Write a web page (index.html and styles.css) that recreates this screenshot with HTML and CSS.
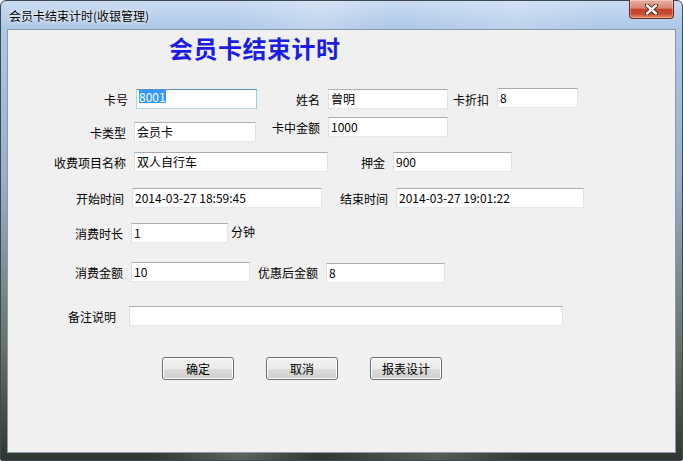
FILE: index.html
```html
<html>

<head>
    <link rel="stylesheet" href="styles.css">
</head>

<body>
    <div class="window">
        <div class="titlebar">
            <span class="title">会员卡结束计时(收银管理)</span>
            <div class="close">
                <svg width="13" height="11" viewBox="0 0 13 11">
                    <path d="M2 1.5 L11 9.5 M11 1.5 L2 9.5" stroke="#3a1810" stroke-width="4.2" stroke-linecap="round" />
                    <path d="M2 1.5 L11 9.5 M11 1.5 L2 9.5" stroke="#ffffff" stroke-width="2.4" stroke-linecap="round" />
                </svg>
            </div>
        </div>

        <div class="client">
            <h1 class="heading">会员卡结束计时</h1>

            <div class="row r1">
                <label class="lbl">卡号</label>
                <div class="tb focus"><span class="sel">8001</span></div>
                <label class="lbl">姓名</label>
                <div class="tb">曾明</div>
                <label class="lbl">卡折扣</label>
                <div class="tb up1">8</div>
            </div>

            <div class="row r2">
                <label class="lbl dn5">卡类型</label>
                <div class="tb dn5">会员卡</div>
                <label class="lbl">卡中金额</label>
                <div class="tb">1000</div>
            </div>

            <div class="row r3">
                <label class="lbl">收费项目名称</label>
                <div class="tb">双人自行车</div>
                <label class="lbl">押金</label>
                <div class="tb">900</div>
            </div>

            <div class="row r4">
                <label class="lbl">开始时间</label>
                <div class="tb">2014-03-27 18:59:45</div>
                <label class="lbl">结束时间</label>
                <div class="tb">2014-03-27 19:01:22</div>
            </div>

            <div class="row r5">
                <label class="lbl">消费时长</label>
                <div class="tb">1</div>
                <span class="unit">分钟</span>
            </div>

            <div class="row r6">
                <label class="lbl">消费金额</label>
                <div class="tb">10</div>
                <label class="lbl">优惠后金额</label>
                <div class="tb dn1">8</div>
            </div>

            <div class="row r7">
                <label class="lbl">备注说明</label>
                <div class="tb"></div>
            </div>

            <div class="buttons">
                <button class="btn">确定</button>
                <button class="btn">取消</button>
                <button class="btn">报表设计</button>
            </div>
        </div>
    </div>
</body>

</html>
```

FILE: styles.css
```css
* {
    box-sizing: border-box;
}

body {
    margin: 0;
    background: #fff;
    font-family: 'Noto Sans CJK SC', 'Liberation Sans', sans-serif;
    font-size: 12px;
    overflow: hidden;
}

/* window frame */

.window {
    width: 683px;
    height: 461px;
    display: flex;
    flex-direction: column;
    padding: 0 6px 7px 6px;
    border: 1px solid #3e4852;
    border-radius: 6px 6px 2px 2px;
    background:
        linear-gradient(100deg, rgba(255, 255, 255, 0) 30%, rgba(255, 255, 255, .22) 42%, rgba(255, 255, 255, 0) 52%, rgba(255, 255, 255, .18) 68%, rgba(255, 255, 255, 0) 80%),
        linear-gradient(#c8dbf1 0, #adc7e7 28px, #97afc6 40%, #66736c 75%, #2f3631 100%);
}

.titlebar {
    height: 28px;
    display: flex;
    align-items: center;
    justify-content: space-between;
}

.title {
    padding-left: 2px;
    font-size: 12px;
    color: #000;
    text-shadow: 0 0 6px rgba(255, 255, 255, .9), 0 0 2px rgba(255, 255, 255, .9);
}

.close {
    align-self: flex-start;
    width: 45px;
    height: 19px;
    margin-top: -1px;
    margin-right: 2px;
    display: flex;
    align-items: center;
    justify-content: center;
    border: 1px solid #6b281c;
    border-top: none;
    border-radius: 0 0 4px 4px;
    background: linear-gradient(#eab0a2 0%, #d88473 45%, #c3432c 52%, #c64a30 75%, #e3895f 100%);
    box-shadow: inset 0 0 0 1px rgba(255, 255, 255, .3);
}

.client {
    flex: 1;
    border: 1px solid #8c99a6;
    background: #f0f0f0;
}

/* form */

.heading {
    margin: 0;
    height: 59px;
    padding-left: 161px;
    font-size: 24px;
    line-height: 35px;
    font-weight: bold;
    letter-spacing: .5px;
    color: #1c1ce4;
}

.row {
    display: grid;
    align-items: start;
}

.lbl {
    height: 20px;
    display: flex;
    align-items: center;
    justify-content: flex-end;
    padding-right: 8px;
    white-space: nowrap;
    color: #000;
}

.tb {
    height: 20px;
    padding: 0 2px;
    line-height: 18px;
    background: #fff;
    border: 1px solid;
    border-color: #abadb3 #e2e3ea #e3e9ef #dbdfe6;
    white-space: nowrap;
    overflow: hidden;
    color: #000;
}

.tb.focus {
    border-color: #5a8fc0 #a4c9e3 #b7d9ed #b5cfe7;
}

.sel {
    display: inline-block;
    line-height: 13px;
    background: #3399ff;
    color: #fff;
}

.dn5 {
    margin-top: 5px;
}

.dn1 {
    margin-top: 1px;
}

.up1 {
    margin-top: -1px;
}

.r1 {
    grid-template-columns: 128px 121px 71px 120px 49px 81px;
}

.r2 {
    margin-top: 8px;
    grid-template-columns: 126px 122px 72px 120px;
}

.r3 {
    margin-top: 10px;
    grid-template-columns: 126px 194px 65px 119px;
}

.r4 {
    margin-top: 16px;
    grid-template-columns: 124px 190px 74px 188px;
}

.r5 {
    margin-top: 15px;
    grid-template-columns: 123px 97px auto;
}

.unit {
    padding-left: 3px;
    line-height: 18px;
}

.r6 {
    margin-top: 19px;
    grid-template-columns: 123px 119px 76px 119px;
}

.r7 {
    margin-top: 23px;
    grid-template-columns: 121px 434px;
}

.r7 .lbl {
    padding-right: 13px;
}

.buttons {
    display: flex;
    gap: 32px;
    margin-top: 31px;
    padding-left: 154px;
}

.btn {
    width: 72px;
    height: 23px;
    padding: 0;
    font-family: 'Noto Sans CJK SC', 'Liberation Sans', sans-serif;
    font-size: 12px;
    color: #000;
    border: 1px solid #707070;
    border-radius: 3px;
    background: linear-gradient(#f2f2f2 0%, #ebebeb 50%, #dddddd 50%, #cfcfcf 100%);
    box-shadow: inset 0 0 0 1px #fcfcfc;
}
```
